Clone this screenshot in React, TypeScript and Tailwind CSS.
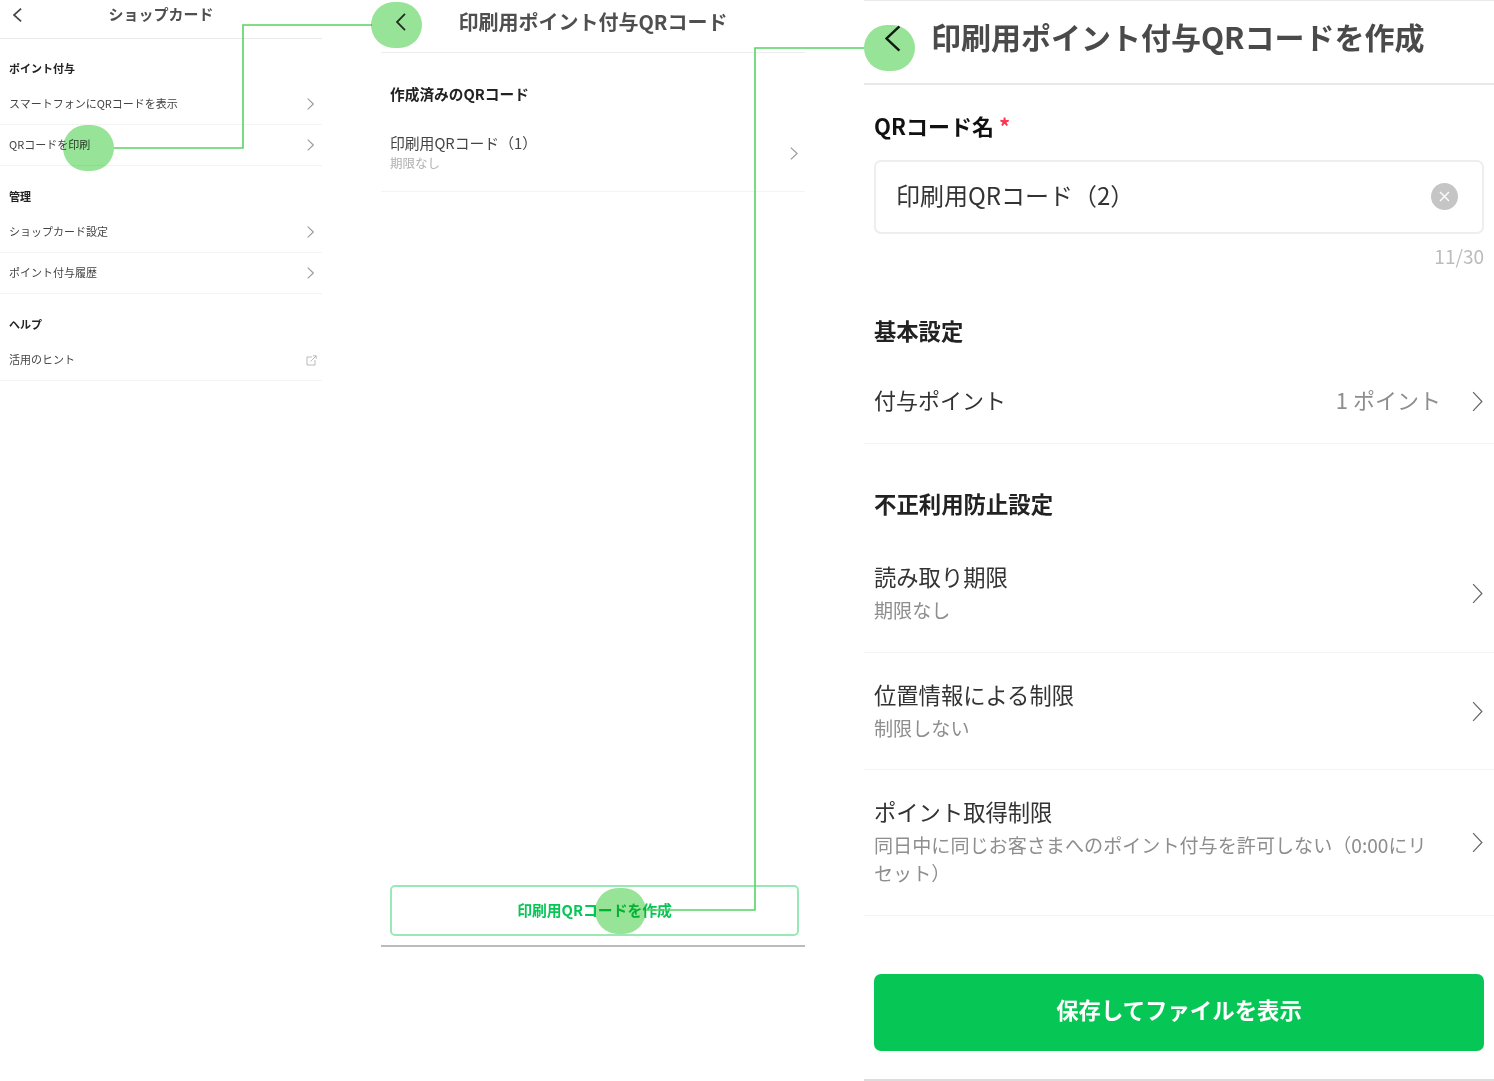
import React from 'react';

const Chevron = ({ w, h, dir = 'right', sw = 1.2, className }: { w: number; h: number; dir?: 'left' | 'right'; sw?: number; className?: string }) => (
  <svg width={w} height={h} viewBox="0 0 10 20" fill="none" preserveAspectRatio="none" className={className}>
    <path
      d={dir === 'right' ? 'M1 1 L9 10 L1 19' : 'M9 1 L1 10 L9 19'}
      stroke="currentColor"
      strokeWidth={sw}
      vectorEffect="non-scaling-stroke"
    />
  </svg>
);

const ExternalIcon = () => (
  <svg width="11" height="11" viewBox="0 0 11 11" fill="none" className="text-[#aaaaaa] -mr-[2px]">
    <path d="M6 2 H1 V10 H9 V5" stroke="currentColor" strokeWidth="0.8" />
    <path d="M4.5 6.5 L10 1 M7 0.8 H10.2 V4" stroke="currentColor" strokeWidth="0.8" />
  </svg>
);

const SmallLabel = ({ children, className }: { children: React.ReactNode; className: string }) => (
  <div className={`${className} pl-[9px] text-[11px] leading-4 font-bold text-[#222222]`}>{children}</div>
);

const SmallRow = ({ label, external }: { label: string; external?: boolean }) => (
  <div className="h-[41px] flex items-center justify-between pl-[9px] pr-[7px] border-b border-[#f4f4f4] text-[11px] text-[#444444]">
    <span className="mb-[2px]">{label}</span>
    {external ? <ExternalIcon /> : <Chevron w={7} h={12} className="text-[#a0a0a0] mr-[1px]" />}
  </div>
);

const SettingRow = ({ title, sub, h }: { title: string; sub: React.ReactNode; h: string }) => (
  <div className={`${h} flex items-center justify-between pl-[10px] pr-[11px] border-b border-[#f4f4f4]`}>
    <div>
      <div className="h-8 text-[22.3px] leading-[26px] text-[#333333]">{title}</div>
      <div className="mt-[1px] text-[19.1px] leading-7 text-[#8e8e8e]">{sub}</div>
    </div>
    <Chevron w={11} h={21} className="text-[#666666] shrink-0" />
  </div>
);

const Dot = ({ className }: { className: string }) => (
  <div className={`absolute w-[51px] h-[46px] rounded-full bg-[#97e397] mix-blend-multiply ${className}`} />
);

export default function App() {
  return (
    <div className="relative flex w-[1494px] h-[1081px] overflow-hidden bg-white font-['Noto_Sans_CJK_JP','Noto_Sans',sans-serif]">
      {/* Step 1 */}
      <div className="w-[322px] shrink-0">
        <div className="relative h-[39px] flex items-center justify-center pb-[9px] border-b border-[#e9e9e9]">
          <Chevron w={9} h={14} dir="left" sw={1.7} className="absolute left-[13px] top-[8px] text-[#444444]" />
          <span className="text-[15px] font-bold text-[#4f4f4f]">ショップカード</span>
        </div>
        <SmallLabel className="h-[45px] pt-[21px]">ポイント付与</SmallLabel>
        <SmallRow label="スマートフォンにQRコードを表示" />
        <SmallRow label="QRコードを印刷" />
        <SmallLabel className="h-[46px] pt-[22px]">管理</SmallLabel>
        <SmallRow label="ショップカード設定" />
        <SmallRow label="ポイント付与履歴" />
        <SmallLabel className="h-[46px] pt-[22px]">ヘルプ</SmallLabel>
        <SmallRow label="活用のヒント" external />
      </div>

      {/* Step 2 */}
      <div className="ml-[59px] w-[424px] h-[947px] shrink-0 flex flex-col border-b-2 border-[#bbbbbb]">
        <div className="relative h-[53px] shrink-0 flex items-center justify-center pb-[9px] border-b border-[#ececec]">
          <Chevron w={10} h={18} dir="left" sw={1.8} className="absolute left-[15px] top-[13px] text-[#333333]" />
          <span className="text-[20px] font-bold text-[#4f4f4f]">印刷用ポイント付与QRコード</span>
        </div>
        <div className="mt-[30px] pl-[9px] pb-[1px] text-[14.7px] leading-[21px] font-bold text-[#222222]">作成済みのQRコード</div>
        <div className="mt-[11px] h-[76px] flex items-center justify-between pl-[9px] pr-[7px] border-b border-[#f4f4f4]">
          <div className="mb-[2px]">
            <div className="text-[14.8px] leading-[21px] text-[#444444]">印刷用QRコード（1）</div>
            <div className="text-[12.5px] leading-[20px] text-[#b0b0b0]">期限なし</div>
          </div>
          <Chevron w={8} h={13} className="text-[#999999]" />
        </div>
        <div className="mt-auto mb-[9px] mx-[9px] w-[409px] h-[51px] flex items-center justify-center pb-[1px] rounded-[5px] border-2 border-[#9ae8b6] text-[14.8px] font-bold text-[#06c755]">
          印刷用QRコードを作成
        </div>
      </div>

      {/* Step 3 */}
      <div className="ml-[59px] w-[630px] shrink-0">
        <div className="relative h-[85px] flex items-center pl-[67px] pb-[11px] border-t border-b-2 border-[#e9e9e9]">
          <Chevron w={16} h={27} dir="left" sw={2.4} className="absolute left-[21px] top-[24px] text-[#1c1c1c]" />
          <span className="text-[30px] font-bold text-[#4a4a4a]">印刷用ポイント付与QRコードを作成</span>
        </div>
        <div className="mt-[26px] h-8 px-[10px] flex items-center gap-[5px] pb-[4px] text-[22px] font-bold text-[#111111]">
          QRコード名<span className="text-[#ff334b] text-[22px] font-bold">*</span>
        </div>
        <div className="mt-[17px] mx-[10px] h-[74px] flex items-center justify-between pl-[20px] pr-[24px] pb-[2px] rounded-[7px] border-2 border-[#eeeeee]">
          <span className="mb-[2px] text-[24px] text-[#333333]">印刷用QRコード（2）</span>
          <div className="w-[27px] h-[27px] rounded-full bg-[#c5c5c5] flex items-center justify-center">
            <svg width="11" height="11" viewBox="0 0 11 11" stroke="white" strokeWidth="1.4">
              <path d="M1 1 L10 10 M10 1 L1 10" />
            </svg>
          </div>
        </div>
        <div className="mt-[9px] h-7 px-[10px] text-right text-[19px] leading-[26px] text-[#bcbcbc]">11/30</div>
        <div className="mt-[45px] h-8 px-[10px] text-[22.3px] leading-[28px] font-bold text-[#222222]">基本設定</div>
        <div className="h-[96px] pt-[8px] flex items-center justify-between pl-[10px] pr-[11px] border-b border-[#f4f4f4]">
          <span className="text-[22px] text-[#333333]">付与ポイント</span>
          <div className="flex items-center gap-[31px]">
            <span className="text-[22px] text-[#8e8e8e]">1 ポイント</span>
            <Chevron w={11} h={21} className="text-[#666666] mt-[3px]" />
          </div>
        </div>
        <div className="mt-[45px] h-8 px-[10px] text-[22.4px] leading-[28px] font-bold text-[#222222]">不正利用防止設定</div>
        <div className="mt-[14px]">
          <SettingRow title="読み取り期限" sub="期限なし" h="h-[118px]" />
          <SettingRow title="位置情報による制限" sub="制限しない" h="h-[117px]" />
          <SettingRow
            title="ポイント取得制限"
            sub={<>同日中に同じお客さまへのポイント付与を許可しない（0:00にリ<br />セット）</>}
            h="h-[146px]"
          />
        </div>
        <div className="mt-[58px] mx-[10px] h-[77px] flex items-center justify-center pb-[5px] rounded-[7px] bg-[#06c755] text-[22.4px] font-bold text-white">
          保存してファイルを表示
        </div>
        <div className="mt-[28px] border-t-2 border-[#dddddd]" />
      </div>

      {/* Connector lines and tap markers over the screens */}
      <svg width="1494" height="1081" fill="none" stroke="#55d562" strokeWidth="1.6" className="absolute left-0 top-0 pointer-events-none">
        <path d="M114 148 H243 V25 H372" />
        <path d="M646 910 H755 V48 H864" />
      </svg>
      <Dot className="left-[63px] top-[125px]" />
      <Dot className="left-[371px] top-[2px]" />
      <Dot className="left-[595px] top-[888px]" />
      <Dot className="left-[864px] top-[25px]" />
    </div>
  );
}
